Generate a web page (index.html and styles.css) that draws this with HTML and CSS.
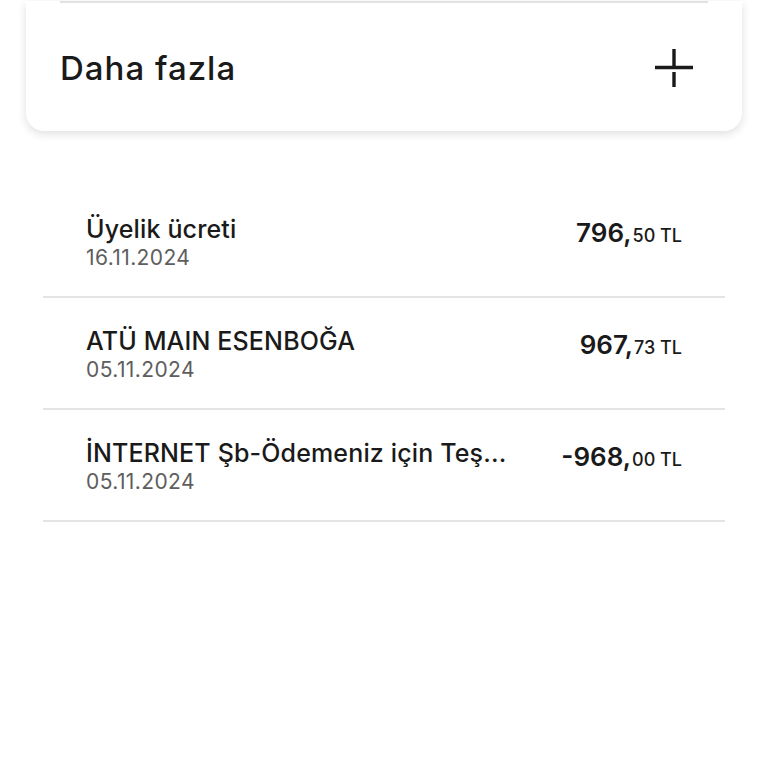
FILE: index.html
```html
<!DOCTYPE html>
<html>
<head>
    <title>Hesap hareketleri</title>
    <link rel="stylesheet" href="styles.css">
</head>
<body>
    <div class="card">
        <div class="card-divider"></div>
        <div class="more-row">
            <span class="more-label">Daha fazla</span>
            <svg class="plus-icon" width="40" height="40" viewBox="0 0 40 40">
                <path d="M20 1 V18 M20 24 V39 M1 19.5 H39" stroke="#1a1a1a" stroke-width="3.4" fill="none"/>
            </svg>
        </div>
    </div>

    <ul class="tx-list">
        <li class="tx-row">
            <div class="tx-info">
                <div class="tx-title">Üyelik ücreti</div>
                <div class="tx-date">16.11.2024</div>
            </div>
            <div class="tx-amount"><span class="amount-int">796,</span><span class="amount-dec">50 TL</span></div>
        </li>
        <li class="tx-row">
            <div class="tx-info">
                <div class="tx-title">ATÜ MAIN ESENBOĞA</div>
                <div class="tx-date">05.11.2024</div>
            </div>
            <div class="tx-amount"><span class="amount-int">967,</span><span class="amount-dec">73 TL</span></div>
        </li>
        <li class="tx-row">
            <div class="tx-info">
                <div class="tx-title">İNTERNET Şb-Ödemeniz için Teş...</div>
                <div class="tx-date">05.11.2024</div>
            </div>
            <div class="tx-amount"><span class="amount-int">-968,</span><span class="amount-dec">00 TL</span></div>
        </li>
    </ul>
</body>
</html>
```

FILE: styles.css
```css
body {
    margin: 0;
    background-color: #fff;
    font-family: Inter, "Noto Sans", sans-serif;
    color: #1a1a1a;
}

.card {
    margin: 0 26px;
    background-color: #fff;
    border-radius: 0 0 18px 18px;
    box-shadow: 0 3px 10px rgba(0, 0, 0, 0.13);
    padding: 0 34px;
}

.card-divider {
    height: 2px;
    margin-top: 1px;
    background-color: #e2e2e2;
}

.more-row {
    height: 128px;
    display: flex;
    align-items: center;
    justify-content: space-between;
    padding-bottom: 2px;
    box-sizing: border-box;
}

.more-label {
    font-size: 33px;
    font-weight: 500;
    letter-spacing: 1px;
    padding-top: 4px;
}

.plus-icon {
    margin-right: 14px;
    margin-top: 4px;
}

.tx-list {
    list-style: none;
    margin: 55px 43px 0;
    padding: 0;
}

.tx-row {
    height: 112px;
    box-sizing: border-box;
    display: flex;
    justify-content: space-between;
    align-items: flex-start;
    padding: 27px 43px 0;
    border-bottom: 2px solid #e4e4e4;
}

.tx-title {
    font-size: 25px;
    line-height: 32px;
    font-weight: 500;
    letter-spacing: 0.15px;
    white-space: nowrap;
}

.tx-date {
    font-size: 21px;
    line-height: 26px;
    color: #5e5e5e;
    letter-spacing: 0.4px;
}

.tx-amount {
    padding-top: 4px;
    white-space: nowrap;
}

.amount-int {
    font-size: 26px;
    font-weight: 600;
}

.amount-dec {
    font-size: 18px;
    font-weight: 500;
    margin-left: 1px;
}
```
